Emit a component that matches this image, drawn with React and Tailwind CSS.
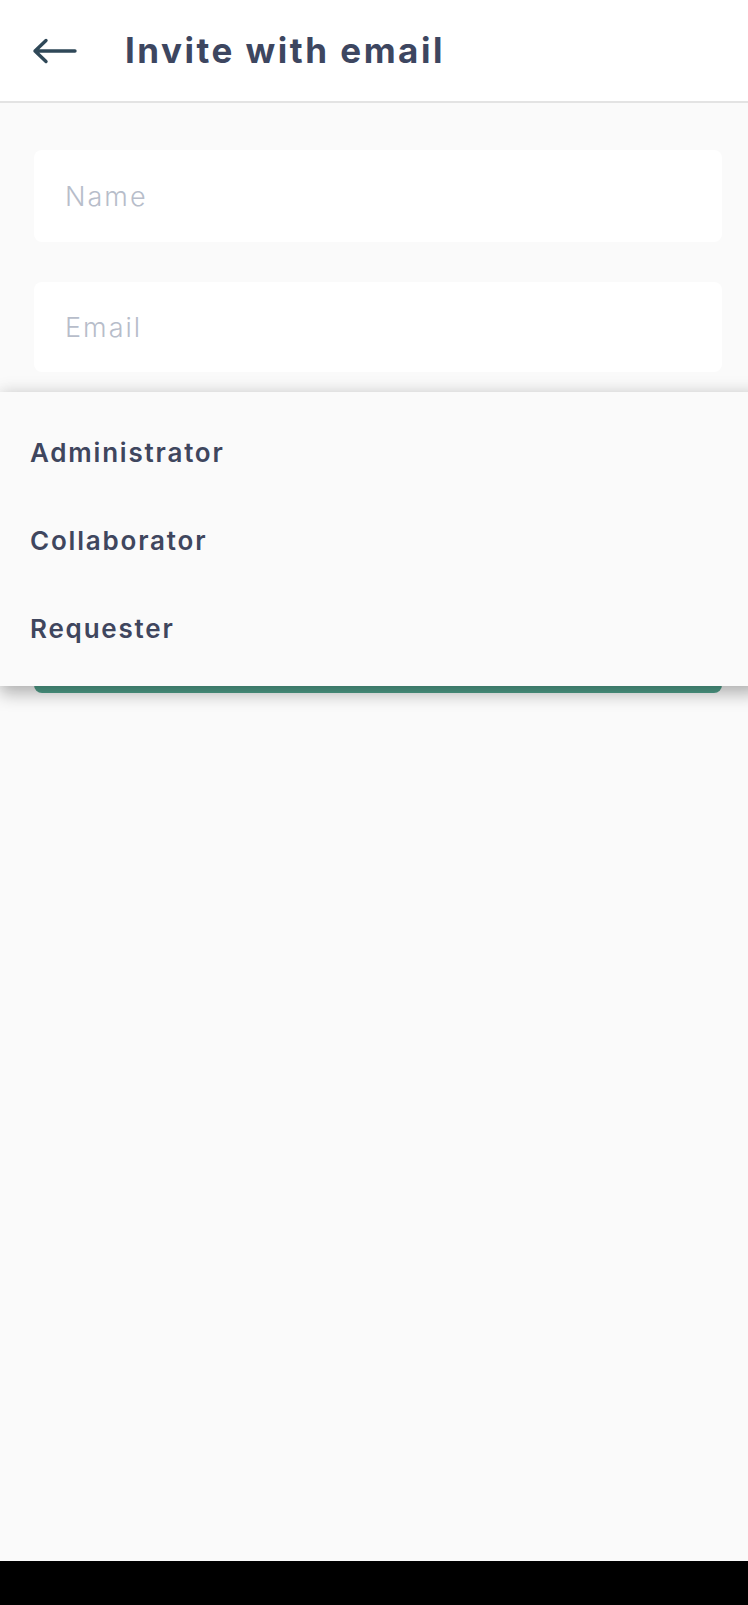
import React, { useState } from "react";

const roles = ["Administrator", "Collaborator", "Requester"];

const BackArrow = () => (
  <svg width="46" height="26" viewBox="0 0 46 26" fill="none" aria-hidden="true">
    <path
      d="M3 13H43M14 2.5L3 13L14 23.5"
      stroke="#2f4858"
      strokeWidth="3.4"
      strokeLinecap="round"
      strokeLinejoin="round"
    />
  </svg>
);

const App = () => {
  const [name, setName] = useState("");
  const [email, setEmail] = useState("");
  const [showRoles, setShowRoles] = useState(true);

  return (
    <div
      className="relative flex min-h-[1605px] flex-col bg-[#fafafa]"
      style={{ fontFamily: "Inter, 'Open Sans', sans-serif" }}
    >
      {/* Header */}
      <div className="flex h-[103px] items-center border-b-2 border-[#e3e3e3] bg-white">
        <button type="button" className="ml-[32px] flex items-center" aria-label="Back">
          <BackArrow />
        </button>
        <h1 className="ml-[47px] text-[35px] font-bold tracking-[2.5px] text-[#3d4660]">
          Invite with email
        </h1>
      </div>

      {/* Form */}
      <div className="flex flex-1 flex-col pl-[34px] pr-[26px] pt-[47px]">
        <input
          className="h-[92px] rounded-lg bg-white px-[31px] text-[27px] font-light tracking-[2px] text-[#3d4660] placeholder:text-[#b7bdca] outline-none"
          placeholder="Name"
          value={name}
          onChange={(e) => setName(e.target.value)}
        />
        <input
          className="mt-[40px] h-[90px] rounded-lg bg-white px-[31px] text-[27px] font-light tracking-[2px] text-[#3d4660] placeholder:text-[#b7bdca] outline-none"
          placeholder="Email"
          value={email}
          onChange={(e) => setEmail(e.target.value)}
        />
        {/* role select, covered by the open menu */}
        <div
          onClick={() => setShowRoles(true)}
          className="mt-[40px] h-[90px] rounded-lg bg-white"
        />
        <button
          type="button"
          aria-label="Send invite"
          className="mt-[101px] h-[90px] rounded-lg bg-[#50a08b]"
        />
      </div>

      {/* Android nav bar */}
      <div className="h-[44px] bg-black" />

      {/* Role dropdown menu */}
      {showRoles && (
        <div className="absolute left-0 top-[392px] w-[760px] bg-[#fafafa] pt-4 pb-[14px] shadow-[0_8px_16px_rgba(0,0,0,0.28),0_-4px_14px_rgba(0,0,0,0.08)]">
          {roles.map((role) => (
            <div
              key={role}
              onClick={() => setShowRoles(false)}
              className="flex h-[88px] items-center pl-[30px] text-[26px] font-semibold tracking-[1.8px] text-[#3f465e]"
            >
              {role}
            </div>
          ))}
        </div>
      )}
    </div>
  );
};

export default App;
